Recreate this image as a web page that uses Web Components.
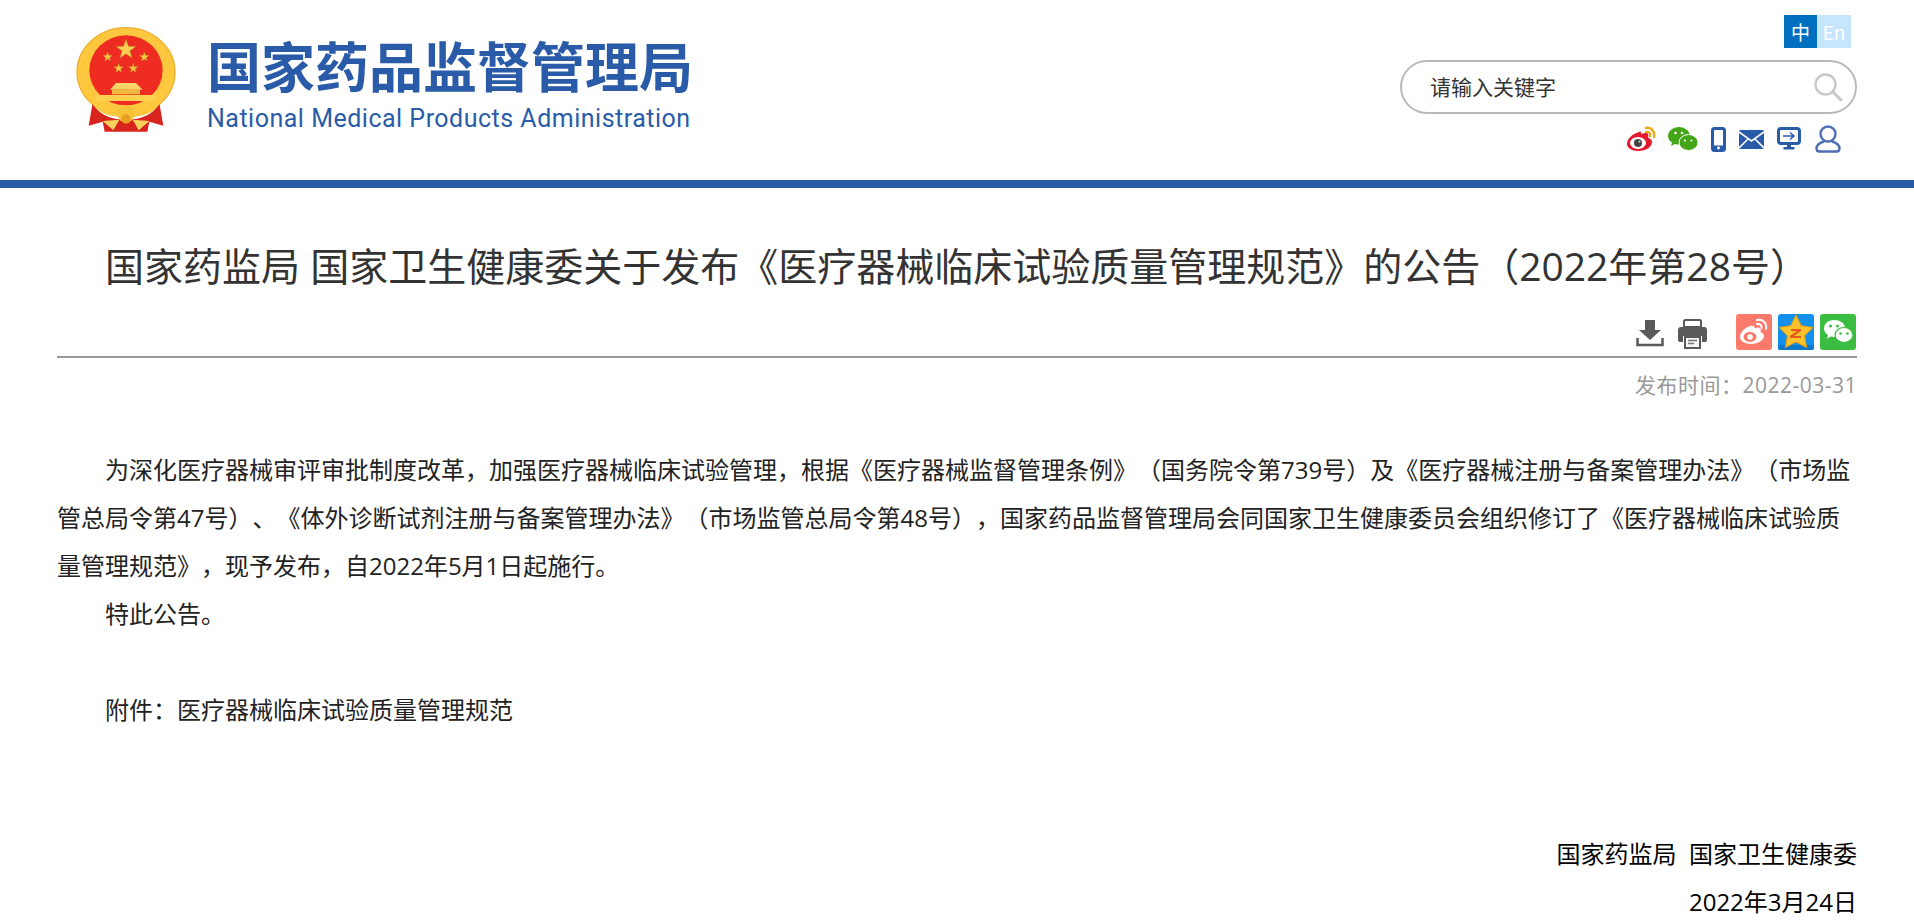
<!DOCTYPE html>
<html lang="zh-CN">
<head>
<meta charset="utf-8">
<title>国家药监局 国家卫生健康委关于发布《医疗器械临床试验质量管理规范》的公告（2022年第28号）</title>
<style>
  html, body { margin: 0; padding: 0; background: #fff; }
  body { font-family: "Noto Sans CJK SC", "Liberation Sans", sans-serif; overflow: hidden; height: 924px; }
</style>
</head>
<body>
<nmpa-header></nmpa-header>
<nmpa-article>
  <span slot="title">国家药监局 国家卫生健康委关于发布《医疗器械临床试验质量管理规范》的公告（2022年第28号）</span>
  <span slot="date">发布时间：2022-03-31</span>
  <p>为深化医疗器械审评审批制度改革，加强医疗器械临床试验管理，根据《医疗器械监督管理条例》（国务院令第739号）及《医疗器械注册与备案管理办法》（市场监管总局令第47号）、《体外诊断试剂注册与备案管理办法》（市场监管总局令第48号），国家药品监督管理局会同国家卫生健康委员会组织修订了《医疗器械临床试验质量管理规范》，现予发布，自2022年5月1日起施行。</p>
  <p>特此公告。</p>
  <p class="blank">&nbsp;</p>
  <p>附件：医疗器械临床试验质量管理规范</p>
  <p class="blank">&nbsp;</p>
  <p class="blank">&nbsp;</p>
  <p class="sign">国家药监局&nbsp; 国家卫生健康委</p>
  <p class="sign">2022年3月24日</p>
</nmpa-article>

<script>
// Small five point star, used by the emblem and the qzone button.
function star(cx, cy, r, inner) {
  const pts = [];
  for (let i = 0; i < 10; i++) {
    const a = -Math.PI / 2 + i * Math.PI / 5, d = i % 2 ? r * (inner || 0.4) : r;
    pts.push((cx + Math.cos(a) * d).toFixed(1) + ',' + (cy + Math.sin(a) * d).toFixed(1));
  }
  return pts.join(' ');
}

class NmpaEmblem extends HTMLElement {
  connectedCallback() {
    const root = this.attachShadow({ mode: 'open' });
    const small = [[143, 112, 15], [253, 112, 15], [176, 146, 15], [220, 146, 15]]
      .map(s => `<polygon points="${star(s[0], s[1], s[2])}" fill="#f5c842" stroke="#b8862a" stroke-width="1"/>`).join('');
    root.innerHTML = `
      <style>
        :host { display: block; width: 100px; height: 106px; }
        svg { display: block; filter: blur(.5px); }
      </style>
      <svg width="100" height="106" viewBox="48 22 300 318" aria-hidden="true">
        <ellipse cx="198" cy="157" rx="147" ry="133" fill="#fdc83e"/>
        <ellipse cx="198" cy="157" rx="147" ry="133" fill="none" stroke="#eeb02e" stroke-width="4"/>
        <path d="M98 250 C118 286 150 300 198 300 C246 300 278 286 298 250 L310 318 L268 306 L262 336 H134 L128 306 L86 318 Z" fill="#d8241c"/>
        <ellipse cx="198" cy="152" rx="110" ry="105" fill="#ee2c22"/>
        <polygon points="${star(198, 90, 31)}" fill="#f8cf50" stroke="#b8862a" stroke-width="1.5"/>
        ${small}
        <path d="M168 190 H228 L248 210 H150 Z" fill="#fbd468"/>
        <rect x="156" y="210" width="84" height="14" fill="#f3b93c"/>
        <path d="M106 226 H290 V244 H106 Z" fill="#fdd04f"/>
        <path d="M88 240 C116 288 160 292 198 292 C236 292 280 288 308 240 L296 232 C270 272 236 274 198 274 C160 274 126 272 100 232 Z" fill="#fdc83e"/>
        <path d="M128 304 L178 300 L160 332 Z M268 304 L218 300 L236 332 Z" fill="#f9cf5c"/>
        <circle cx="198" cy="284" r="25" fill="#f8c237"/>
        <circle cx="198" cy="298" r="14" fill="#e79e22"/>
      </svg>`;
  }
}
customElements.define('nmpa-emblem', NmpaEmblem);

class NmpaLogo extends HTMLElement {
  connectedCallback() {
    this.attachShadow({ mode: 'open' }).innerHTML = `
      <style>
        :host { display: flex; align-items: flex-start; gap: 31px; color: #2a5ba8; }
        .names { display: flex; flex-direction: column; padding-top: 15px; }
        .cn { font: 700 54px/54px "Liberation Sans", "Noto Sans CJK SC", sans-serif; white-space: nowrap; }
        .en { font: 400 25px/30px Roboto, "Liberation Sans", sans-serif; margin-top: 8px; white-space: nowrap; letter-spacing: .5px; }
      </style>
      <nmpa-emblem></nmpa-emblem>
      <div class="names">
        <div class="cn">国家药品监督管理局</div>
        <div class="en">National Medical Products Administration</div>
      </div>`;
  }
}
customElements.define('nmpa-logo', NmpaLogo);

class NmpaSearch extends HTMLElement {
  connectedCallback() {
    this.attachShadow({ mode: 'open' }).innerHTML = `
      <style>
        :host { display: flex; align-items: center; justify-content: space-between; box-sizing: border-box;
                width: 457px; height: 54px; border: 2px solid #b9b9b9; border-radius: 27px; padding: 0 12px 0 28px; }
        span { font: 400 21px/1 "Noto Sans CJK SC", sans-serif; color: #333; margin-bottom: 2px; }
        svg { display: block; }
      </style>
      <span>请输入关键字</span>
      <svg width="30" height="30" viewBox="0 0 30 30" fill="none" stroke="#c8c8c8" stroke-width="2.4" stroke-linecap="round">
        <circle cx="12.5" cy="12.5" r="10"/><path d="M20 20l8 8" stroke-width="3"/>
      </svg>`;
  }
}
customElements.define('nmpa-search', NmpaSearch);

class NmpaHeader extends HTMLElement {
  connectedCallback() {
    this.attachShadow({ mode: 'open' }).innerHTML = `
      <style>
        :host { display: block; border-bottom: 8px solid #2a5ba8; height: 180px; }
        .wrap { display: flex; justify-content: space-between; padding: 15px 57px 0 76px; }
        nmpa-logo { margin-top: 12px; }
        .right { display: flex; flex-direction: column; align-items: flex-end; }
        .lang { display: flex; margin-right: 6px; font: 400 19px/33px "Noto Sans CJK SC", sans-serif; color: #fff; }
        .lang span { width: 33px; height: 33px; text-align: center; background: #006fc0; }
        .lang span + span { background: #c6e6ff; width: 34px; }
        nmpa-search { margin-top: 12px; }
        .icons { display: flex; align-items: center; margin: 10px 16px 0 0; height: 30px; }
        .icons svg + svg { margin-left: 13px; }
        .icons svg + svg.wx { margin-left: 11px; }
        .icons svg + svg.me { margin-left: 14px; }
        svg { display: block; filter: blur(.25px); }
      </style>
      <div class="wrap">
        <nmpa-logo></nmpa-logo>
        <div class="right">
          <div class="lang"><span>中</span><span>En</span></div>
          <nmpa-search></nmpa-search>
          <div class="icons">
            <svg width="31" height="26" viewBox="0 0 31 26">
              <path d="M13 6C6 8 1 13 1 18c0 4 5 7 11 7 8 0 14-4 14-9 0-3-3-4-4-4 1-3 0-5-2-5-2-.3-5 1-5 1 .5-2 0-3-2-2z" fill="#e6162d"/>
              <ellipse cx="12" cy="17" rx="8" ry="6" fill="#fff"/><circle cx="12" cy="17" r="4" fill="#444"/><circle cx="13.5" cy="15.5" r="1" fill="#ddd"/>
              <path d="M20 2c5-1 9 3 8 9M20 6c3-.5 4.500 1 4 4" fill="none" stroke="#eaa918" stroke-width="2.400" stroke-linecap="round"/>
            </svg>
            <svg class="wx" width="30" height="26" viewBox="0 0 30 26">
              <path d="M11 1C5 1 0 5 0 10c0 3 1.500 5 4 6.500L3 20l4-2c1.500.5 3 .6 4 .6C18 19 22 14 22 9 21 4 16 1 11 1z" fill="#43a517"/>
              <ellipse cx="20.500" cy="16.500" rx="9.500" ry="8" fill="#43a517" stroke="#fff" stroke-width="1"/>
              <circle cx="7.500" cy="7" r="1.300" fill="#fff"/><circle cx="14" cy="7" r="1.300" fill="#fff"/>
              <circle cx="17" cy="14.500" r="1.100" fill="#fff"/><circle cx="23.500" cy="14.500" r="1.100" fill="#fff"/>
            </svg>
            <svg width="15" height="25" viewBox="0 0 15 25">
              <rect x="1.500" y="1.500" width="12" height="22" rx="2" fill="#fff" stroke="#2a5ba8" stroke-width="3"/>
              <rect x="1" y="18.500" width="13" height="5" fill="#2a5ba8"/><circle cx="7.500" cy="21" r="1.400" fill="#fff"/>
            </svg>
            <svg width="25" height="19" viewBox="0 0 25 19">
              <rect width="25" height="19" rx="1.500" fill="#2a5ba8"/>
              <path d="M0 2l12.500 9L25 2M0 18l9-9M25 18l-9-9" fill="none" stroke="#fff" stroke-width="1.600"/>
            </svg>
            <svg width="24" height="24" viewBox="0 0 24 24">
              <rect x="1.500" y="1.500" width="21" height="15" rx="2.500" fill="none" stroke="#2a5ba8" stroke-width="3"/>
              <path d="M6 9h11M13 5.500L17 9l-4 3.500" fill="none" stroke="#2a5ba8" stroke-width="1.500"/>
              <path d="M10 17h4v3h3.500v2.500h-11V20H10z" fill="#2a5ba8"/>
            </svg>
            <svg class="me" width="26" height="28" viewBox="0 0 26 28" fill="none" stroke="#4e6fb4" stroke-width="2.400">
              <circle cx="13" cy="9" r="7.500"/>
              <path d="M9 16.500C4 18 1.500 20.500 1.500 23.500c0 2 1.500 3 3 3h17c1.500 0 3-1 3-3 0-3-2.500-5.500-7.500-7"/>
            </svg>
          </div>
        </div>
      </div>`;
  }
}
customElements.define('nmpa-header', NmpaHeader);

class NmpaShare extends HTMLElement {
  connectedCallback() {
    this.attachShadow({ mode: 'open' }).innerHTML = `
      <style>
        :host { display: flex; align-items: flex-start; height: 36px; padding-right: 1px; }
        svg { display: block; filter: blur(.3px); }
        .tool { margin: 5px 14px 0 0; }
        .print { margin: 5px 29px 0 0; }
        .btn { margin-left: 6px; }
      </style>
      <svg class="tool" width="28" height="28" viewBox="0 0 28 28">
        <path d="M9 1h10v10h6L14 21 3 11h6z" fill="#595959"/>
        <path d="M1.500 19v7h25v-7" fill="none" stroke="#595959" stroke-width="2.500"/>
      </svg>
      <svg class="print" width="29" height="30" viewBox="0 0 29 30">
        <path d="M6 8V2.500A1.500 1.500 0 0 1 7.500 1h14A1.500 1.500 0 0 1 23 2.500V8z" fill="none" stroke="#595959" stroke-width="2"/>
        <path d="M3 8h23a3 3 0 0 1 3 3v10a2 2 0 0 1-2 2h-3v-6H5v6H2a2 2 0 0 1-2-2V11a3 3 0 0 1 3-3z" fill="#595959"/>
        <path d="M7 18h15v11H7z" fill="#f4f4f4" stroke="#595959" stroke-width="2"/>
        <path d="M10 21.500h9M10 24.500h6" stroke="#777" stroke-width="1.400"/>
      </svg>
      <svg width="36" height="36" viewBox="0 0 36 36">
        <rect width="36" height="36" rx="3" fill="#fb7a6c"/>
        <path d="M14 12C8 14 4 19 4 23c0 4 5 7 11 7 7 0 13-4 13-8 0-3-3-3.500-3.500-3.800 1-3 0-4.500-2-4.700-2 0-4 1-4 1 .5-2-.5-3.500-4.500-2.500z" fill="#fff"/>
        <ellipse cx="14" cy="23" rx="6.500" ry="5" fill="#fb7a6c"/><circle cx="14" cy="23" r="2.800" fill="#fff"/>
        <path d="M21 6c6-1 10 3 9 9M21 10c3-.5 5 1.500 4.500 4" fill="none" stroke="#fff" stroke-width="2" stroke-linecap="round"/>
      </svg>
      <svg class="btn" width="36" height="36" viewBox="0 0 36 36">
        <rect width="36" height="36" rx="3" fill="#1290ee"/>
        <rect y="31" width="36" height="5" rx="2" fill="#0a78cd"/>
        <polygon points="${star(18, 19, 18, .5)}" fill="#fcc22c" stroke="#e39a10" stroke-width="1"/>
        <path d="M13 15h10v2l-7 5h7v2H12v-2l7-5h-6z" fill="#e55a1e"/>
      </svg>
      <svg class="btn" width="36" height="36" viewBox="0 0 36 36">
        <rect width="36" height="36" rx="3" fill="#3bbd42"/>
        <path d="M14 6C8 6 4 10 4 14.500c0 3 1.500 5 4 6.500l-1 3.500 4-2c1 .3 2 .5 3 .5 6 0 11-4 11-9S20 6 14 6z" fill="#fff"/>
        <ellipse cx="24" cy="21" rx="9" ry="7.500" fill="#fff" stroke="#3bbd42" stroke-width="1.200"/>
        <circle cx="10.500" cy="12" r="1.500" fill="#3bbd42"/><circle cx="17.500" cy="12" r="1.500" fill="#3bbd42"/>
        <circle cx="20.500" cy="19.500" r="1.300" fill="#3bbd42"/><circle cx="27.500" cy="19.500" r="1.300" fill="#3bbd42"/>
      </svg>`;
  }
}
customElements.define('nmpa-share', NmpaShare);

const articleTpl = document.createElement('template');
articleTpl.innerHTML = `
  <style>
    /* Open Sans first: its digits are about as wide as the reference's; CJK falls through to Noto. */
    :host { display: block; padding: 0 57px; font-family: "Open Sans", "Noto Sans CJK SC", sans-serif; text-spacing-trim: space-all; }
    h1 { margin: 0; padding-top: 51px; font-size: 39px; line-height: 54px; font-weight: 400; color: #333; text-align: center; white-space: nowrap; }
    .tools { display: flex; justify-content: flex-end; margin-top: 21px; padding-bottom: 6px; border-bottom: 2px solid #999; }
    .date { font-size: 21px; letter-spacing: .5px; line-height: 30px; color: #999; text-align: right; margin-top: 12px; }
    .body { margin-top: 46px; color: #222; font-size: 24px; line-height: 48px; }
    ::slotted(p) { margin: 0; text-indent: 48px; }
    ::slotted(p.sign) { text-align: right; text-indent: 0; color: #000; }
    ::slotted(p.blank) { text-indent: 0; }
  </style>
  <h1><slot name="title"></slot></h1>
  <div class="tools"><nmpa-share></nmpa-share></div>
  <div class="date"><slot name="date"></slot></div>
  <div class="body"><slot></slot></div>`;

class NmpaArticle extends HTMLElement {
  connectedCallback() {
    this.attachShadow({ mode: 'open' }).appendChild(articleTpl.content.cloneNode(true));
  }
}
customElements.define('nmpa-article', NmpaArticle);
</script>
</body>
</html>
